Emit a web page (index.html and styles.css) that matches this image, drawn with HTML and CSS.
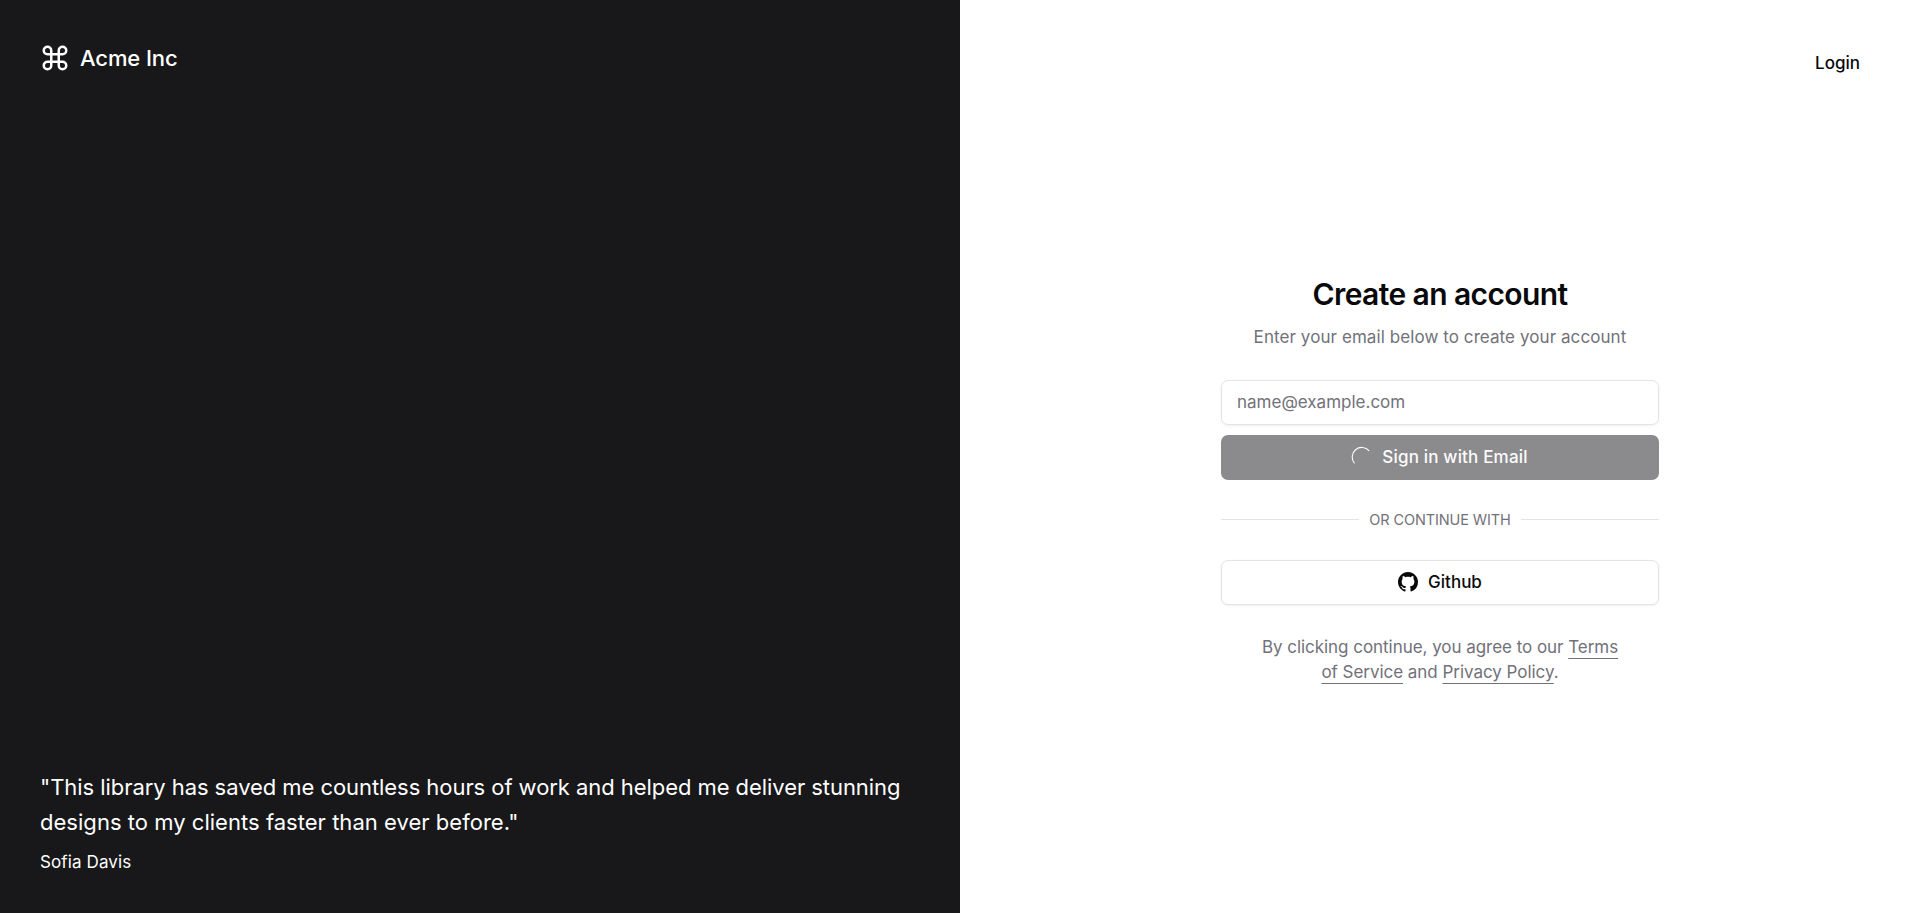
FILE: index.html
```html
<!DOCTYPE html>
<html lang="en">
<head>
<meta charset="utf-8">
<title>Create an account</title>
<link rel="stylesheet" href="styles.css">
</head>
<body>
<main class="page">
  <section class="brand-panel">
    <div class="brand">
      <svg class="brand-icon" viewBox="0 0 24 24" fill="none" stroke="currentColor" stroke-width="2" stroke-linecap="round" stroke-linejoin="round"><path d="M15 6v12a3 3 0 1 0 3-3H6a3 3 0 1 0 3 3V6a3 3 0 1 0-3 3h12a3 3 0 1 0-3-3"/></svg>
      <span class="brand-name">Acme Inc</span>
    </div>
    <blockquote class="quote">
      <p class="quote-text"><span class="quote-first">"This library has saved me countless hours of work and helped me deliver stunning</span><br><span class="quote-second">designs to my clients faster than ever before."</span></p>
      <footer class="quote-author"><span>Sofia Davis</span></footer>
    </blockquote>
  </section>
  <section class="form-panel">
    <nav class="top-nav"><a class="login" href="#">Login</a></nav>
    <div class="signup">
      <header class="heading">
        <h1 class="title"><span>Create an account</span></h1>
        <p class="subtitle"><span>Enter your email below to create your account</span></p>
      </header>
      <div class="auth">
        <form class="email-form">
          <div class="field"><span class="placeholder">name@example.com</span></div>
          <button class="button primary" type="button" disabled>
            <svg class="spinner" viewBox="0 0 20 20" fill="none" stroke="currentColor" stroke-width="1.1"><path d="M2.5 15.4A9.6 9.6 0 0 1 17.2 2.8"/></svg>
            <span class="primary-label">Sign in with Email</span>
          </button>
        </form>
        <div class="divider"><span class="divider-label">OR CONTINUE WITH</span></div>
        <button class="button outline" type="button">
          <svg class="github" viewBox="0 0 16 16" fill="currentColor"><path d="M8 0C3.58 0 0 3.58 0 8c0 3.54 2.29 6.53 5.47 7.59.4.07.55-.17.55-.38 0-.19-.01-.82-.01-1.49-2.01.37-2.53-.49-2.69-.94-.09-.23-.48-.94-.82-1.13-.28-.15-.68-.52-.01-.53.63-.01 1.08.58 1.23.82.72 1.21 1.87.87 2.33.66.07-.52.28-.87.51-1.07-1.78-.2-3.64-.89-3.64-3.95 0-.87.31-1.59.82-2.15-.08-.2-.36-1.02.08-2.12 0 0 .67-.21 2.2.82.64-.18 1.32-.27 2-.27s1.36.09 2 .27c1.53-1.04 2.2-.82 2.2-.82.44 1.1.16 1.92.08 2.12.51.56.82 1.27.82 2.15 0 3.07-1.87 3.75-3.65 3.95.29.25.54.73.54 1.48 0 1.07-.01 1.93-.01 2.2 0 .21.15.46.55.38A8.01 8.01 0 0 0 16 8c0-4.42-3.58-8-8-8z"/></svg>
          <span class="github-label">Github</span>
        </button>
      </div>
      <p class="terms"><span class="terms-first">By clicking continue, you agree to our <a href="#">Terms</a></span><br><span class="terms-second"><a href="#">of Service</a> and <a href="#">Privacy Policy</a>.</span></p>
    </div>
  </section>
</main>
</body>
</html>
```
FILE: styles.css
```css
* { box-sizing: border-box; margin: 0; padding: 0; }
body { font-family: Inter, "Liberation Sans", sans-serif; font-size: 17px; line-height: 25px; color: #09090b; background: #fff; }
.page { display: grid; grid-template-columns: 1fr 1fr; height: 913px; overflow: hidden; }
.brand-panel { display: flex; flex-direction: column; justify-content: space-between; padding: 40px 40px 38px; background: #18181b; color: #fff; white-space: nowrap; }
.brand { display: flex; align-items: center; height: 35px; gap: 10px; font-size: 22px; font-weight: 500; }
.brand-icon { width: 30px; height: 30px; }
.brand-name { padding-top: 2px; letter-spacing: -0.1px; }
.quote { display: flex; flex-direction: column; gap: 10px; }
.quote-text { font-size: 22px; line-height: 35px; }
.quote-first { letter-spacing: -0.06px; }
.quote-second { letter-spacing: 0.03px; }
.quote-author { letter-spacing: 0.12px; }
.form-panel { display: grid; grid-template-rows: 126px auto; justify-items: center; align-content: start; }
.top-nav { justify-self: end; padding: 51px 60px 0 0; }
.login { color: inherit; text-decoration: none; font-weight: 500; }
.signup { width: 438px; display: flex; flex-direction: column; gap: 30px; padding-top: 148px; }
.heading { display: flex; flex-direction: column; gap: 11px; text-align: center; }
.title { font-size: 30px; line-height: 40px; font-weight: 600; letter-spacing: -0.6px; }
.subtitle { color: #71717a; letter-spacing: 0.08px; }
.auth { display: flex; flex-direction: column; gap: 30px; }
.email-form { display: flex; flex-direction: column; gap: 10px; }
.field { height: 45px; display: flex; align-items: center; padding: 0 15px; border: 1px solid #e4e4e7; border-radius: 7px; box-shadow: 0 1px 3px rgba(0,0,0,.06); color: #71717a; }
.button { height: 45px; display: flex; align-items: center; justify-content: center; border: 0; border-radius: 7px; font: inherit; font-weight: 500; }
.primary { gap: 10px; background: #8b8b8d; color: #fcfcfc; }
.primary-label { letter-spacing: 0.18px; }
.spinner { width: 20px; height: 20px; overflow: visible; }
.divider { display: flex; align-items: center; gap: 10px; height: 20px; color: #71717a; font-size: 14.5px; line-height: 20px; white-space: nowrap; }
.divider-label { letter-spacing: -0.1px; }
.divider::before, .divider::after { content: ""; flex: 1; height: 1px; margin-bottom: 1px; background: #e4e4e7; }
.outline { gap: 10px; background: #fff; border: 1px solid #e4e4e7; box-shadow: 0 1px 3px rgba(0,0,0,.06); color: #09090b; }
.github { width: 20px; height: 20px; margin-top: -1px; }
.terms { color: #71717a; text-align: center; white-space: nowrap; letter-spacing: -0.04px; }
.terms a { color: inherit; text-decoration: underline; text-underline-offset: 5px; text-decoration-thickness: 1px; text-decoration-skip-ink: none; }
```
